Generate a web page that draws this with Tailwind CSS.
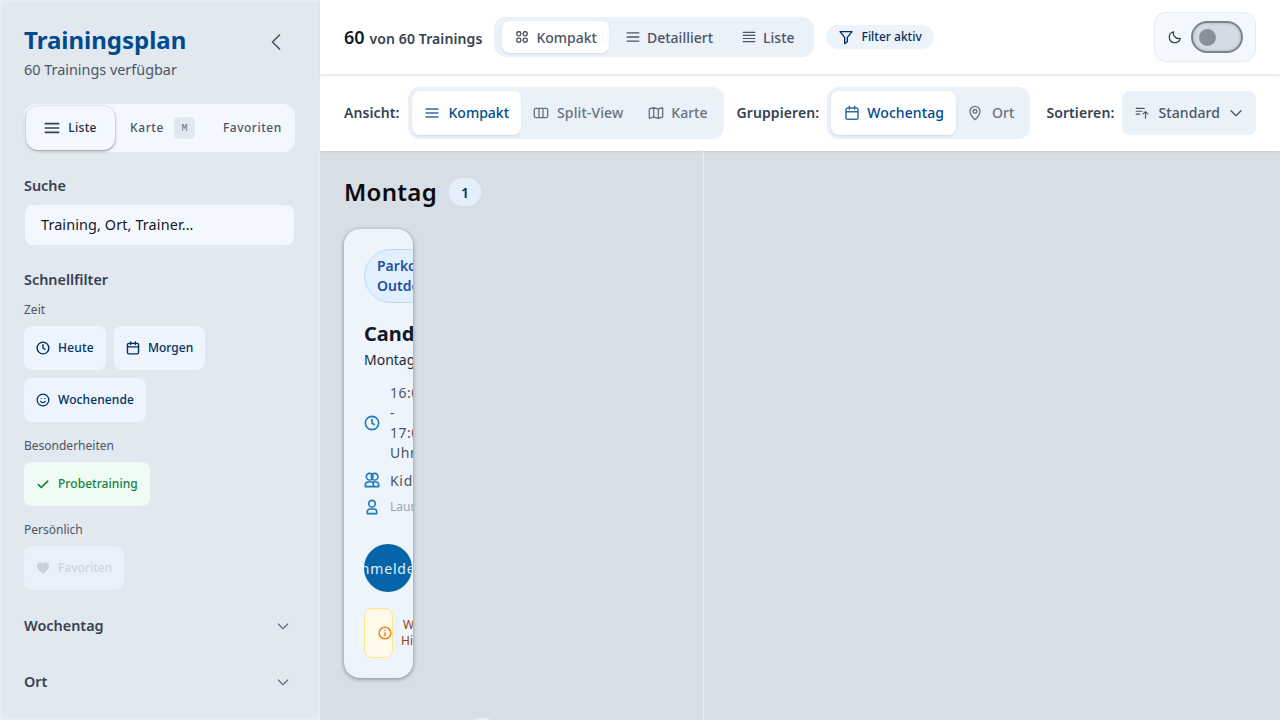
<!DOCTYPE html>
<html lang="de">
  <head>
    <title>Trainingsplan</title>
    <meta charset="UTF-8" />
    <meta name="viewport" content="width=device-width, initial-scale=1.0" />
    <script src="https://cdn.jsdelivr.net/npm/@tailwindcss/browser@4"></script>
  </head>
  <body class="h-[720px] w-[1280px] overflow-hidden bg-[#d8dee6] font-['Noto_Sans',sans-serif]">
    <div class="flex h-full">
      <!-- Sidebar -->
      <aside class="h-full w-[320px] shrink-0 overflow-hidden bg-[#e2e8ef] px-6 pt-[24px] shadow-[inset_0_0_4px_rgba(255,255,255,0.6)]">
        <div class="flex items-start justify-between">
          <div>
            <h1 class="text-[24px] leading-[32px] font-bold text-[#004a8f]">Trainingsplan</h1>
            <p class="mt-[4px] text-[14.4px] leading-[20px] text-[#4b5563]">60 Trainings verfügbar</p>
          </div>
          <button class="mr-[2px] flex h-9 w-9 items-center justify-center text-[#4b5563]">
            <svg class="h-6 w-6" viewBox="0 0 24 24" fill="none" stroke="currentColor" stroke-width="1.700" stroke-linecap="round" stroke-linejoin="round"><path d="M15.500 5l-7 7 7 7" /></svg>
          </button>
        </div>

        <div class="mt-[24px] flex h-12 w-[271px] items-center rounded-xl bg-[#f3f8ff] p-[2px]">
          <button class="flex h-11 w-[89px] items-center justify-center gap-2 rounded-xl bg-[#f3f8ff] text-[12px] font-medium tracking-[0.3px] text-[#1f2937] shadow-[0_1px_3px_rgba(0,0,0,0.45)]">
            <svg class="h-4 w-4" viewBox="0 0 24 24" fill="none" stroke="#374151" stroke-width="2.400" stroke-linecap="round"><path d="M2 5.500h20M2 12h20M2 18.500h20" /></svg>
            Liste
          </button>
          <span class="ml-[15px] text-[12px] font-medium tracking-[0.6px] text-[#4b5563]">Karte</span>
          <span class="ml-[10px] flex h-[22px] w-[21px] items-center justify-center rounded bg-[#e2e8f0] font-['Liberation_Mono',monospace] text-[10px] text-[#6b7280]">M</span>
          <span class="ml-[28px] text-[12px] font-medium tracking-[0.5px] text-[#4b5563]">Favoriten</span>
        </div>

        <h2 class="mt-[24px] text-[14.4px] leading-[20px] font-semibold text-[#374151]">Suche</h2>
        <div class="mt-[9px] ml-[1px] flex h-10 w-[269px] items-center rounded-lg bg-[#f3f8ff] px-4 text-[14.4px] tracking-[0.12px] text-[#111827]">Training, Ort, Trainer...</div>

        <h2 class="mt-[25px] text-[14.4px] leading-[20px] font-semibold text-[#374151]">Schnellfilter</h2>
        <p class="mt-[12px] text-[12px] leading-[16px] text-[#4b5563]">Zeit</p>
        <div class="mt-[8px] flex gap-2">
          <button class="flex h-11 items-center gap-2 rounded-lg bg-[#edf4fd] px-3 text-[12px] font-medium tracking-[0.2px] text-[#00305f]">
            <svg class="h-[14px] w-[14px]" viewBox="0 0 24 24" fill="none" stroke="#00305f" stroke-width="2.400" stroke-linecap="round" stroke-linejoin="round"><circle cx="12" cy="12" r="10" /><path d="M12 6.500V12l3.500 2.500" /></svg>
            Heute
          </button>
          <button class="flex h-11 items-center gap-2 rounded-lg bg-[#edf4fd] px-3 text-[12px] font-medium tracking-[0.05px] text-[#00305f]">
            <svg class="h-[14px] w-[14px]" viewBox="0 0 24 24" fill="none" stroke="#00305f" stroke-width="2.400" stroke-linecap="round" stroke-linejoin="round"><rect x="2.500" y="4" width="19" height="18" rx="2.500" /><path d="M2.500 10h19M8 1.500V6M16 1.500V6" /></svg>
            Morgen
          </button>
        </div>
        <div class="mt-[8px] flex">
          <button class="flex h-11 items-center gap-2 rounded-lg bg-[#edf4fd] px-3 text-[12px] font-medium tracking-[0.1px] text-[#00305f]">
            <svg class="h-[14px] w-[14px]" viewBox="0 0 24 24" fill="none" stroke="#00305f" stroke-width="2.200" stroke-linecap="round" stroke-linejoin="round"><circle cx="12" cy="12" r="10" /><path d="M8 14.500s1.500 2 4 2 4-2 4-2M9 9.500h.01M15 9.500h.01" /></svg>
            Wochenende
          </button>
        </div>
        <p class="mt-[16px] text-[12px] leading-[16px] text-[#4b5563]">Besonderheiten</p>
        <div class="mt-[8px] flex">
          <button class="flex h-11 items-center gap-2 rounded-lg bg-[#effcf4] px-3 text-[12px] font-medium tracking-[0.05px] text-[#15803d]">
            <svg class="h-[14px] w-[14px]" viewBox="0 0 24 24" fill="none" stroke="#15803d" stroke-width="3" stroke-linecap="round" stroke-linejoin="round"><path d="M4 13l5 5L20 7" /></svg>
            Probetraining
          </button>
        </div>
        <p class="mt-[16px] text-[12px] leading-[16px] text-[#4b5563]">Persönlich</p>
        <div class="mt-[8px] flex">
          <button class="flex h-11 items-center gap-2 rounded-lg bg-[#e9f0f9] px-3 text-[12px] font-medium text-[#cdd3dc]">
            <svg class="h-[14px] w-[14px]" viewBox="0 0 24 24" fill="#cbd1db"><path d="M12 22l-1.600-1.400C5.200 16 1.500 12.700 1.500 8.500 1.500 5.100 4.100 2.500 7.500 2.500c1.800 0 3.500.8 4.500 2.200 1-1.400 2.700-2.200 4.500-2.200 3.400 0 6 2.600 6 6 0 4.200-3.700 7.500-8.900 12.100z" /></svg>
            Favoriten
          </button>
        </div>
        <div class="mt-[24px] flex h-6 items-center justify-between pr-[5px]">
          <span class="text-[14.4px] leading-[20px] font-semibold text-[#374151]">Wochentag</span>
          <svg class="h-4 w-4" viewBox="0 0 24 24" fill="none" stroke="#6b7280" stroke-width="2" stroke-linecap="round" stroke-linejoin="round"><path d="M5 9l7 7 7-7" /></svg>
        </div>
        <div class="mt-[32px] flex h-6 items-center justify-between pr-[5px]">
          <span class="text-[14.4px] leading-[20px] font-semibold text-[#374151]">Ort</span>
          <svg class="h-4 w-4" viewBox="0 0 24 24" fill="none" stroke="#6b7280" stroke-width="2" stroke-linecap="round" stroke-linejoin="round"><path d="M5 9l7 7 7-7" /></svg>
        </div>
      </aside>

      <!-- Main -->
      <main class="flex min-w-0 flex-1 flex-col">
        <header class="z-10 flex h-[74px] shrink-0 items-center bg-white px-6 shadow-[0_1px_3px_rgba(0,0,0,0.15)]">
          <div class="flex items-baseline gap-[5px] font-semibold">
            <span class="text-[18px] text-[#111827]">60</span>
            <span class="text-[14px] tracking-[0.1px] text-[#374151]">von 60 Trainings</span>
          </div>
          <div class="ml-3 flex h-10 items-center rounded-xl bg-[#eaf1f9] px-2 py-1">
            <button class="flex h-8 items-center gap-[7px] rounded-lg bg-white pr-3 pl-[13px] text-[14px] font-medium text-[#4b5563] shadow-[0_1px_2px_rgba(0,0,0,0.1)]">
              <svg class="h-[14px] w-[14px]" viewBox="0 0 24 24" fill="none" stroke="#4b5563" stroke-width="2.400"><rect x="3" y="3" width="7" height="7" rx="3" /><rect x="14" y="3" width="7" height="7" rx="3" /><rect x="3" y="14" width="7" height="7" rx="3" /><rect x="14" y="14" width="7" height="7" rx="3" /></svg>
              Kompakt
            </button>
            <button class="flex h-8 items-center gap-[7px] px-[17px] text-[14px] font-medium text-[#4b5563]">
              <svg class="h-[14px] w-[14px]" viewBox="0 0 24 24" fill="none" stroke="#4b5563" stroke-width="2.400" stroke-linecap="round"><path d="M2 5h20M2 12h20M2 19h20" /></svg>
              Detailliert
            </button>
            <button class="flex h-8 items-center gap-[7px] pr-[11px] pl-[12px] text-[14px] font-medium text-[#4b5563]">
              <svg class="h-[14px] w-[14px]" viewBox="0 0 24 24" fill="none" stroke="#4b5563" stroke-width="2" stroke-linecap="round"><path d="M2 4h20M2 9.300h20M2 14.600h20M2 20h20" /></svg>
              Liste
            </button>
          </div>
          <div class="ml-3 flex h-6 items-center gap-2 rounded-full bg-[#edf3fb] px-3 text-[12px] font-medium text-[#00305f]">
            <svg class="h-4 w-4" viewBox="0 0 24 24" fill="none" stroke="#00305f" stroke-width="2" stroke-linecap="round" stroke-linejoin="round"><path d="M3 4h18l-7 8.500V19l-4 3v-9.500z" /></svg>
            Filter aktiv
          </div>
          <div class="ml-auto flex h-[50px] w-[102px] items-center gap-[9px] rounded-xl border border-[#e4ebf3] bg-[#f3f8ff] pl-[13px]">
            <svg class="h-[14px] w-[14px]" viewBox="0 0 24 24" fill="none" stroke="#374151" stroke-width="2.200" stroke-linecap="round" stroke-linejoin="round"><path d="M21 14.500A9.500 9.500 0 0 1 9.500 3a9.500 9.500 0 1 0 11.500 11.500z" /></svg>
            <div class="flex h-8 w-[52px] items-center rounded-full border-2 border-[#7d838e] bg-[#d5dbe4] pl-[6px] shadow-[inset_0_0_3px_rgba(0,0,0,0.25)]">
              <span class="h-[17px] w-[17px] rounded-full bg-[#8a9099]"></span>
            </div>
          </div>
        </header>

        <div class="flex h-[77px] shrink-0 items-center bg-white pl-6 shadow-[0_1px_2px_rgba(0,0,0,0.08)]">
          <span class="text-[14px] font-semibold tracking-[0.1px] text-[#374151]">Ansicht:</span>
          <div class="ml-2 flex h-[52px] items-center rounded-xl bg-[#eaf1f9] p-1">
            <button class="flex h-11 items-center gap-2 rounded-lg bg-white px-3 text-[14px] font-medium text-[#004a8f] shadow-[0_1px_2px_rgba(0,0,0,0.1)]">
              <svg class="h-4 w-4" viewBox="0 0 24 24" fill="none" stroke="#336e9f" stroke-width="2.400" stroke-linecap="round"><path d="M3 6h18M3 12h18M3 18h18" /></svg>
              <span class="ml-[1px]">Kompakt</span>
            </button>
            <button class="flex h-11 items-center gap-2 pr-[13px] pl-[12px] text-[14px] font-medium tracking-[0.1px] text-[#6b7280]">
              <svg class="h-4 w-4" viewBox="0 0 24 24" fill="none" stroke="#6b7280" stroke-width="2" stroke-linejoin="round"><rect x="2" y="5" width="20" height="14" rx="2.500" /><path d="M9 5v14M15 5v14" /></svg>
              Split-View
            </button>
            <button class="flex h-11 items-center gap-[7px] px-3 text-[14px] font-medium text-[#6b7280]">
              <svg class="h-4 w-4" viewBox="0 0 24 24" fill="none" stroke="#6b7280" stroke-width="2" stroke-linejoin="round"><path d="M2 6l6.500-2 7 2 6.500-2v14l-6.500 2-7-2-6.500 2zM8.500 4v14M15.500 6v14" /></svg>
              Karte
            </button>
          </div>
          <span class="ml-[13px] text-[14px] font-semibold tracking-[0.1px] text-[#374151]">Gruppieren:</span>
          <div class="ml-[8px] flex h-[52px] items-center rounded-xl bg-[#eaf1f9] p-1">
            <button class="flex h-11 items-center gap-[7px] rounded-lg bg-white pr-3 pl-[13px] text-[14px] font-medium tracking-[0.1px] text-[#004a8f] shadow-[0_1px_2px_rgba(0,0,0,0.1)]">
              <svg class="h-4 w-4" viewBox="0 0 24 24" fill="none" stroke="#336e9f" stroke-width="2.200" stroke-linecap="round" stroke-linejoin="round"><rect x="3" y="4.500" width="18" height="17" rx="2.500" /><path d="M3 10h18M8 2v4M16 2v4" /></svg>
              Wochentag
            </button>
            <button class="flex h-11 items-center gap-[9px] pr-3 pl-[11px] text-[14px] font-medium text-[#6b7280]">
              <svg class="h-4 w-4" viewBox="0 0 24 24" fill="none" stroke="#6b7280" stroke-width="2" stroke-linejoin="round"><path d="M12 22s7.500-6.500 7.500-12.500a7.500 7.500 0 0 0-15 0C4.500 15.500 12 22 12 22z" /><circle cx="12" cy="9.500" r="2.800" /></svg>
              Ort
            </button>
          </div>
          <span class="ml-4 text-[14px] font-semibold tracking-[0.1px] text-[#374151]">Sortieren:</span>
          <button class="ml-2 flex h-11 w-[134px] items-center rounded-lg bg-[#eaf1f9] pl-[13px] text-[14px] font-medium tracking-[0.1px] text-[#4b5563]">
            <svg class="h-[14px] w-[14px]" viewBox="0 0 24 24" fill="none" stroke="#4b5563" stroke-width="2" stroke-linecap="round" stroke-linejoin="round"><path d="M2 4h14M2 9h10M2 14h6M18 21V10M14 13.500L18 9.500l4 4" /></svg>
            <span class="ml-[9px]">Standard</span>
            <svg class="ml-[8px] h-4 w-4" viewBox="0 0 24 24" fill="none" stroke="#4b5563" stroke-width="2" stroke-linecap="round" stroke-linejoin="round"><path d="M4.500 8.500l7.500 7.500 7.500-7.500" /></svg>
          </button>
        </div>

        <!-- Content -->
        <div class="relative flex min-h-0 flex-1">
          <section class="h-full w-[384px] shrink-0 border-r border-[#e6ebf1] px-6 pt-[26px]">
            <div class="flex h-[30px] items-center gap-3">
              <h2 class="text-[24px] leading-[30px] font-semibold tracking-[0.3px] text-[#0a0a0a]">Montag</h2>
              <span class="flex h-7 w-8 items-center justify-center rounded-full bg-[#e3f0fb] text-[14px] font-semibold text-[#00305f]">1</span>
            </div>
            <article class="mt-[22px] h-[449px] w-[69px] overflow-hidden rounded-2xl bg-[#edf4fc] py-5 pl-5 shadow-[0_1px_4px_rgba(0,0,0,0.4)]">
              <div class="w-[110px] rounded-[27px] border border-[#b9dcf9] bg-[#e2f0fe] py-[6px] pl-3 text-[14px] leading-[20px] font-semibold text-[#1e4fa3]">Parkour<br />Outdoor</div>
              <h3 class="mt-[17px] whitespace-nowrap text-[20px] leading-[28px] font-bold text-[#111827]">Candy Kids</h3>
              <p class="mt-[2px] whitespace-nowrap text-[14px] leading-[20px] text-[#1f2937]">Montag</p>
              <div class="mt-[13px] flex h-[80px] items-center">
                <svg class="h-4 w-4 shrink-0" viewBox="0 0 24 24" fill="none" stroke="#1e78bd" stroke-width="2.400" stroke-linecap="round" stroke-linejoin="round"><circle cx="12" cy="12" r="10" /><path d="M12 6.500V12l3.500 2.500" /></svg>
                <p class="ml-[10px] w-[30px] text-[14px] leading-[20px] tracking-[0.5px] text-[#4b5563]">16:00 - 17:00 Uhr</p>
              </div>
              <div class="mt-[7px] flex h-[20px] items-center">
                <svg class="h-4 w-4 shrink-0" viewBox="0 0 24 24" fill="none" stroke="#1e78bd" stroke-width="2.400" stroke-linecap="round" stroke-linejoin="round"><circle cx="8.500" cy="7" r="5" /><circle cx="16" cy="7" r="5" /><path d="M2 22v-3.500A4 4 0 0 1 6 15h12a4 4 0 0 1 4 3.500V22zM13 15l2 7" /></svg>
                <span class="ml-[10px] whitespace-nowrap text-[14px] tracking-[0.7px] text-[#4b5563]">Kids</span>
              </div>
              <div class="mt-[7px] flex h-[20px] items-center">
                <svg class="h-4 w-4 shrink-0" viewBox="0 0 24 24" fill="none" stroke="#1e78bd" stroke-width="2.400" stroke-linecap="round" stroke-linejoin="round"><circle cx="12" cy="7" r="5" /><path d="M5 22v-3a4 4 0 0 1 4-4h6a4 4 0 0 1 4 4v3z" /></svg>
                <span class="ml-[10px] whitespace-nowrap text-[12px] text-[#9ca3af]">Laura</span>
              </div>
              <div class="mt-[27px] flex h-12 w-12 items-center justify-center overflow-hidden rounded-full bg-[#0565a8]">
                <span class="whitespace-nowrap text-[14px] tracking-[0.8px] text-[#e3f0fb]">Anmelden</span>
              </div>
              <div class="mt-4 flex items-center">
                <div class="flex h-[50px] w-[29px] shrink-0 items-center justify-end rounded-lg border border-[#fde68a] bg-[#fff9ea]">
                  <svg class="h-[14px] w-[14px]" viewBox="0 0 24 24" fill="none" stroke="#e8862a" stroke-width="2.600" stroke-linecap="round"><circle cx="12" cy="12" r="10" /><path d="M12 11.500v5M12 7.500h.01" /></svg>
                </div>
                <p class="ml-2 whitespace-nowrap text-[12px] leading-[16px] text-[#92400e]"><span class="ml-[2px]">Wichtig</span><br />Hinweis</p>
              </div>
            </article>
          </section>
          <div class="absolute top-[567px] left-[152px] h-6 w-[21px] rounded-lg bg-[#e6f1fb]"></div>
        </div>
      </main>
    </div>
  </body>
</html>
